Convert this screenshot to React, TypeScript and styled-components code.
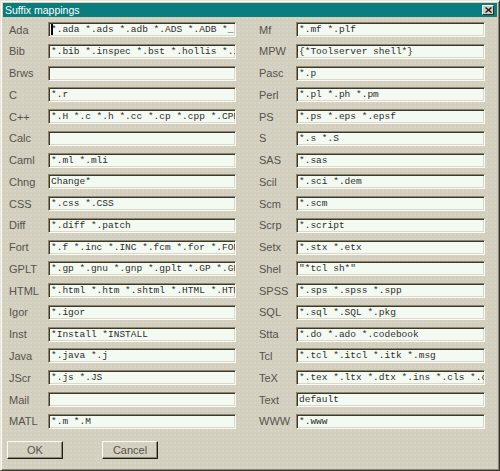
import React from "react";
import styled, { createGlobalStyle } from "styled-components";

const GlobalStyle = createGlobalStyle`
  html, body {
    margin: 0;
    padding: 0;
    background: #d3cfbf;
  }
  * { box-sizing: border-box; }
`;

type Mapping = { name: string; value: string };

const left: Mapping[] = [
  { name: "Ada", value: "*.ada *.ads *.adb *.ADS *.ADB *_.a *.ada" },
  { name: "Bib", value: "*.bib *.inspec *.bst *.hollis *.isi" },
  { name: "Brws", value: "" },
  { name: "C", value: "*.r" },
  { name: "C++", value: "*.H *.c *.h *.cc *.cp *.cpp *.CPP *.hh" },
  { name: "Calc", value: "" },
  { name: "Caml", value: "*.ml *.mli" },
  { name: "Chng", value: "Change*" },
  { name: "CSS", value: "*.css *.CSS" },
  { name: "Diff", value: "*.diff *.patch" },
  { name: "Fort", value: "*.f *.inc *.INC *.fcm *.for *.FOR *.F" },
  { name: "GPLT", value: "*.gp *.gnu *.gnp *.gplt *.GP *.GNU" },
  { name: "HTML", value: "*.html *.htm *.shtml *.HTML *.HTM" },
  { name: "Igor", value: "*.igor" },
  { name: "Inst", value: "*Install *INSTALL" },
  { name: "Java", value: "*.java *.j" },
  { name: "JScr", value: "*.js *.JS" },
  { name: "Mail", value: "" },
  { name: "MATL", value: "*.m *.M" },
];

const right: Mapping[] = [
  { name: "Mf", value: "*.mf *.plf" },
  { name: "MPW", value: "{*Toolserver shell*}" },
  { name: "Pasc", value: "*.p" },
  { name: "Perl", value: "*.pl *.ph *.pm" },
  { name: "PS", value: "*.ps *.eps *.epsf" },
  { name: "S", value: "*.s *.S" },
  { name: "SAS", value: "*.sas" },
  { name: "Scil", value: "*.sci *.dem" },
  { name: "Scm", value: "*.scm" },
  { name: "Scrp", value: "*.script" },
  { name: "Setx", value: "*.stx *.etx" },
  { name: "Shel", value: "\"*tcl sh*\"" },
  { name: "SPSS", value: "*.sps *.spss *.spp" },
  { name: "SQL", value: "*.sql *.SQL *.pkg" },
  { name: "Stta", value: "*.do *.ado *.codebook" },
  { name: "Tcl", value: "*.tcl *.itcl *.itk *.msg" },
  { name: "TeX", value: "*.tex *.ltx *.dtx *.ins *.cls *.clo" },
  { name: "Text", value: "default" },
  { name: "WWW", value: "*.www" },
];

const Window = styled.div`
  width: 500px;
  height: 471px;
  display: flex;
  flex-direction: column;
  padding: 1px;
  background-color: #d3cfbf;
  background-image: radial-gradient(circle, rgba(232, 229, 217, 0.55) 0.6px, transparent 0.8px);
  background-size: 4px 4px;
  border-top: 1px solid #e9e6da;
  border-left: 1px solid #e9e6da;
  border-right: 1px solid #3a372e;
  border-bottom: 1px solid #3a372e;
  box-shadow: inset 1px 1px 0 #fbfaf4, inset -1px -1px 0 #8a8574;
  font-family: "Liberation Sans", Arial, sans-serif;
`;

const TitleBar = styled.div`
  height: 14px;
  margin: 1px 1px 0 1px;
  background: #0a7e7f;
  display: flex;
  align-items: center;
  justify-content: space-between;
  padding: 0 3px 0 2px;
`;

const Title = styled.span`
  color: #ffffff;
  font-size: 10.5px;
  line-height: 14px;
`;

const CloseButton = styled.div`
  width: 12px;
  height: 10px;
  background: #d3cfbf;
  border-top: 1px solid #fbfaf4;
  border-left: 1px solid #fbfaf4;
  border-right: 1px solid #2e2b24;
  border-bottom: 1px solid #2e2b24;
  display: flex;
  align-items: center;
  justify-content: center;
`;

const Body = styled.div`
  flex: 1;
  display: flex;
  flex-direction: column;
  padding-top: 5px;
`;

const Columns = styled.div`
  display: flex;
  gap: 23px;
  padding-left: 7px;
`;

const Column = styled.div<{ $label: number; $field: number }>`
  display: grid;
  grid-template-columns: ${(p) => p.$label}px ${(p) => p.$field}px;
  grid-auto-rows: 21.78px;
  align-items: start;
`;

const Label = styled.span`
  height: 15px;
  display: flex;
  align-items: center;
  font-size: 11px;
  color: #55534c;
  white-space: nowrap;
`;

const Field = styled.div`
  position: relative;
  height: 15px;
  background: #f3faf1;
  border-top: 1px solid #8b8570;
  border-left: 1px solid #8b8570;
  border-right: 1px solid #fbfaf4;
  border-bottom: 1px solid #fbfaf4;
  box-shadow: inset 1px 1px 0 #3d3829, inset -1px -1px 0 #dcd8c8;
  padding: 0 2px 0 2px;
  overflow: hidden;
  white-space: nowrap;
  font-family: "Liberation Mono", "Courier New", monospace;
  font-size: 9.5px;
  line-height: 13px;
  color: #2e2e2e;
`;

const Caret = styled.span`
  position: absolute;
  left: 2px;
  top: 1px;
  width: 2px;
  height: 11px;
  background: #000;
`;

const ButtonRow = styled.div`
  display: flex;
  gap: 39px;
  padding-left: 5px;
  margin-top: 5px;
`;

const Button = styled.div`
  width: 56px;
  height: 18px;
  display: flex;
  align-items: center;
  justify-content: center;
  font-size: 11px;
  color: #55534c;
  border-top: 1px solid #fbfaf4;
  border-left: 1px solid #fbfaf4;
  border-right: 1px solid #1e1c17;
  border-bottom: 1px solid #1e1c17;
  box-shadow: inset -1px -1px 0 #8a8574;
`;

const CloseGlyph = () => (
  <svg width="7" height="6" viewBox="0 0 7 6">
    <path d="M0.5 0.5 L6.5 5.5 M6.5 0.5 L0.5 5.5" stroke="#1a1a1a" strokeWidth="1.4" fill="none" />
  </svg>
);

const MappingColumn = ({
  items,
  labelWidth,
  fieldWidth,
  focusFirst,
}: {
  items: Mapping[];
  labelWidth: number;
  fieldWidth: number;
  focusFirst?: boolean;
}) => (
  <Column $label={labelWidth} $field={fieldWidth}>
    {items.map((m, i) => (
      <React.Fragment key={m.name}>
        <Label>{m.name}</Label>
        <Field>
          {focusFirst && i === 0 && <Caret />}
          {m.value}
        </Field>
      </React.Fragment>
    ))}
  </Column>
);

export default function App() {
  return (
    <>
      <GlobalStyle />
      <Window>
        <TitleBar>
          <Title>Suffix mappings</Title>
          <CloseButton>
            <CloseGlyph />
          </CloseButton>
        </TitleBar>
        <Body>
          <Columns>
            <MappingColumn items={left} labelWidth={39} fieldWidth={188} focusFirst />
            <MappingColumn items={right} labelWidth={37} fieldWidth={189} />
          </Columns>
          <ButtonRow>
            <Button>OK</Button>
            <Button>Cancel</Button>
          </ButtonRow>
        </Body>
      </Window>
    </>
  );
}
